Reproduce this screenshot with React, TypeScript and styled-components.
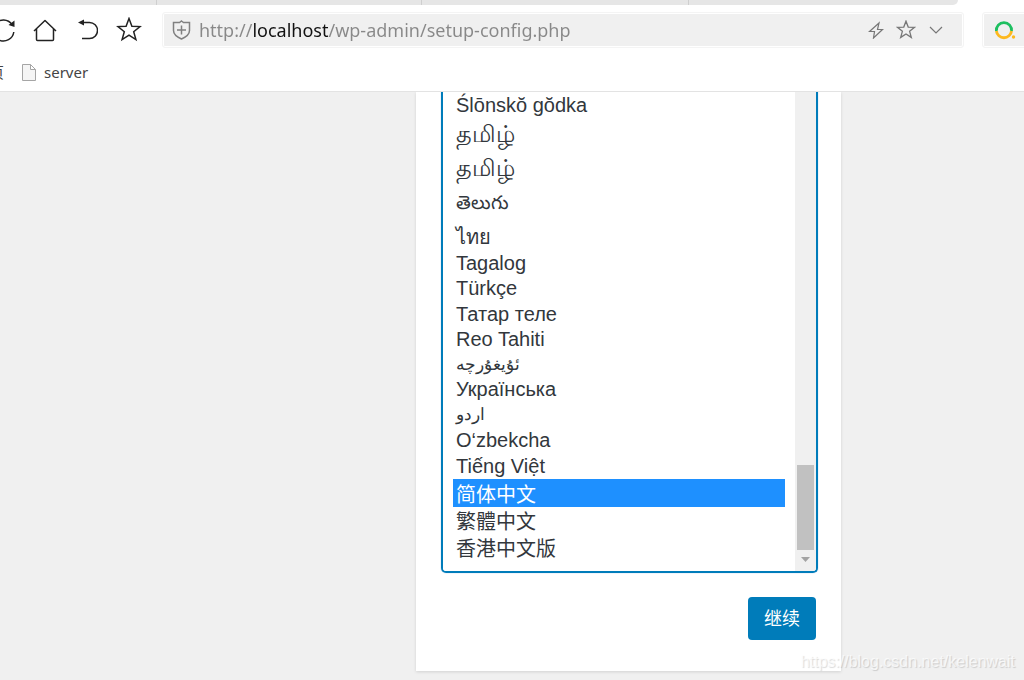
import React from "react";
import styled, { createGlobalStyle } from "styled-components";

const GlobalStyle = createGlobalStyle`
  *, *::before, *::after { box-sizing: border-box; }
  html, body { margin: 0; height: 100%; }
  #root { height: 100%; }
  body {
    font-family: "Liberation Sans", "Noto Sans CJK SC", sans-serif;
    color: #32373c;
    background: #f0f0f0;
    overflow: hidden;
  }
`;

const Shell = styled.div`
  position: relative;
  display: flex;
  flex-direction: column;
  min-height: 100%;
`;

const Header = styled.header`
  background: #fff;
  border-bottom: 1px solid #e3e3e3;
  overflow: hidden;
`;

const TabStrip = styled.div`
  display: flex;
  height: 5px;
  margin-right: 66px;
  background: #e6e6e6;
  border-bottom-right-radius: 8px;
  overflow: hidden;
`;

const TabEdge = styled.div<{ $width: number }>`
  flex: 0 0 ${(p) => p.$width}px;
  border-right: 1px solid #cfcfcf;
`;

const Toolbar = styled.div`
  display: flex;
  align-items: center;
  height: 50px;
  margin-left: -18px;
`;

const ToolButton = styled.button`
  display: flex;
  flex: none;
  align-items: center;
  justify-content: center;
  width: 42px;
  height: 34px;
  padding: 0;
  border: 0;
  background: none;
  color: #222;
`;

const Field = styled.div`
  display: flex;
  align-items: center;
  height: 36px;
  background: #f0f0f0;
  background-clip: padding-box;
  border: 1px solid #f4f4f4;
  box-shadow: inset 0 0 0 1px #fff;
  border-radius: 3px;
`;

const AddressField = styled(Field)`
  flex: 1;
  min-width: 0;
  margin: 0 18px 0 12px;
  padding: 0 12px 0 9px;
  color: #808080;
`;

const AddressInput = styled.input`
  flex: 1;
  min-width: 0;
  height: 30px;
  margin-left: 8px;
  padding: 0;
  border: 0;
  outline: 0;
  font: 18px/30px "Noto Sans", sans-serif;
  color: #888;
  -webkit-text-fill-color: transparent;
  background: linear-gradient(90deg, #888 54px, #111 54px, #111 129px, #888 129px);
  -webkit-background-clip: text;
  background-clip: text;
`;

const FieldButton = styled(ToolButton)`
  width: 30px;
  height: 30px;
  color: #777;
`;

const SearchField = styled(Field)`
  flex: 0 0 60px;
  margin-right: -18px;
  padding-left: 11px;
`;

const Bookmarks = styled.nav`
  display: flex;
  align-items: center;
  height: 36px;
  margin-left: -11px;
  padding-bottom: 2px;
  gap: 18px;
`;

const Bookmark = styled.a`
  display: flex;
  align-items: center;
  gap: 8px;
  color: #444;
  font: 15px/20px "Noto Sans", "Noto Sans CJK SC", sans-serif;
  text-decoration: none;
`;

const Page = styled.main`
  display: grid;
  flex: 1;
  grid-template-columns: 416fr 425px 183fr;
  align-items: start;
`;

const SetupCard = styled.form`
  grid-column: 2;
  padding: 0 23px 31px 25px;
  background: #fff;
  box-shadow: 0 1px 3px rgba(0, 0, 0, 0.13);
  clip-path: inset(0 -6px -6px -6px);
`;

const ListFrame = styled.div`
  display: flex;
  border: 2px solid #007cba;
  border-top: 0;
  border-radius: 0 0 5px 5px;
  box-shadow: 0 0 1px #5b9dd9;
  overflow: hidden;
`;

const LanguageList = styled.select`
  flex: 1;
  min-width: 0;
  height: 479px;
  padding: 0 10px;
  border: 0;
  outline: 0;
  overflow: hidden;
  background: #fff;
  color: #32373c;
  font: 20px/25px "Liberation Sans", "Noto Sans CJK SC", sans-serif;
  scrollbar-width: none;
`;

const Language = styled.option<{ $height: number; $size: number }>`
  display: flex;
  align-items: center;
  height: ${(p) => p.$height}px;
  min-height: 0;
  padding: 0 3px;
  font-size: ${(p) => p.$size}px;
  line-height: 25px;
  direction: ltr;

  &:checked {
    color: #fff;
    background: #1e90ff linear-gradient(#1e90ff, #1e90ff);
  }
`;

const Track = styled.div`
  display: flex;
  flex: 0 0 21px;
  flex-direction: column;
  align-items: center;
  justify-content: flex-end;
  background: #f0f0f0;
`;

const Thumb = styled.div`
  width: 17px;
  height: 85px;
  background: #c1c1c1;
`;

const ScrollArrow = styled.svg`
  display: block;
  margin: 7px 0 9px;
`;

const Step = styled.div`
  display: flex;
  justify-content: flex-end;
  padding: 24px 2px 0 0;
`;

const ContinueButton = styled.button`
  height: 43px;
  padding: 0 16px;
  border: 0;
  border-radius: 4px;
  background: #007cba;
  color: #fff;
  font: 18px/26px "Liberation Sans", "Noto Sans CJK SC", sans-serif;
`;

const Watermark = styled.span`
  position: absolute;
  right: 9px;
  bottom: 8px;
  color: rgba(255, 255, 255, 0.7);
  font-size: 16px;
  line-height: 20px;
  text-shadow: 1px 1px 1px rgba(0, 0, 0, 0.15);
`;

type Entry = { code: string; name: string; height?: number; size?: number };

const languages: Entry[] = [
  { code: "szl", name: "Ślōnskŏ gŏdka", height: 26 },
  { code: "ta_IN", name: "தமிழ்", height: 34, size: 24 },
  { code: "ta_LK", name: "தமிழ்", height: 34, size: 24 },
  { code: "te", name: "తెలుగు", height: 37, size: 19 },
  { code: "th", name: "ไทย", height: 28 },
  { code: "tl", name: "Tagalog" },
  { code: "tr_TR", name: "Türkçe" },
  { code: "tt_RU", name: "Татар теле", height: 26 },
  { code: "tah", name: "Reo Tahiti" },
  { code: "ug_CN", name: "ئۇيغۇرچە", size: 17 },
  { code: "uk", name: "Українська" },
  { code: "ur", name: "اردو", size: 17 },
  { code: "uz_UZ", name: "O‘zbekcha", height: 26 },
  { code: "vi", name: "Tiếng Việt", height: 26 },
  { code: "zh_CN", name: "简体中文", height: 28 },
  { code: "zh_TW", name: "繁體中文", height: 27 },
  { code: "zh_HK", name: "香港中文版", height: 27 },
];

const stroke = { fill: "none", stroke: "currentColor", strokeWidth: 1.5 };

const ReloadIcon = () => (
  <svg width="26" height="26" viewBox="0 0 26 26" {...stroke}>
    <path d="M22 7.500A10.500 10.500 0 1 0 23.800 15" />
    <path d="M24.500 3.500v6.500l-6-2z" fill="currentColor" stroke="none" />
  </svg>
);

const HomeIcon = () => (
  <svg width="24" height="24" viewBox="0 0 24 24" {...stroke} strokeLinejoin="round">
    <path d="M1 13 12 2.500 23 13M3.500 11v10.500q0 1 1 1h15q1 0 1-1V11" />
  </svg>
);

const UndoIcon = () => (
  <svg width="22" height="24" viewBox="0 0 22 24" {...stroke}>
    <path d="M6 4.500h7.500a8 8 0 0 1 0 16H6" />
    <path d="M2 4.500l6-3v6z" fill="currentColor" stroke="none" />
  </svg>
);

const StarIcon = ({ size, weight }: { size: number; weight: number }) => (
  <svg width={size} height={size} viewBox="0 0 26 26" fill="none" stroke="currentColor" strokeWidth={weight}>
    <path d="M13 1.500l2.900 7.700 8.200.4-6.400 5.100 2.200 7.900-6.900-4.500-6.900 4.500 2.200-7.900L1.900 9.600l8.200-.4z" />
  </svg>
);

const ShieldIcon = () => (
  <svg width="19" height="20" viewBox="0 0 19 20" {...stroke}>
    <path d="M9.500 1 11.500 2.500H17.500V10.500C17.500 14.500 14 17 9.500 19 5 17 1.500 14.500 1.500 10.500V2.500H7.500z" />
    <path d="M9.500 5.500v9M5 10h9" />
  </svg>
);

const BoltIcon = () => (
  <svg width="16" height="18" viewBox="0 0 16 18" fill="none" stroke="currentColor" strokeWidth="1.200">
    <path d="M11 2 1.500 10.500h5L5.500 17 14.500 8.500h-5z" />
  </svg>
);

const ChevronIcon = () => (
  <svg width="14" height="8" viewBox="0 0 14 8" fill="none" stroke="currentColor" strokeWidth="1.200">
    <path d="M1 1l6 6 6-6" />
  </svg>
);

const SearchLogo = () => (
  <svg width="22" height="20" viewBox="0 0 22 20" fill="none">
    <path d="M2.400 11a7.600 7.600 0 1 1 15.100 0" stroke="#1dbf60" strokeWidth="2.800" />
    <path d="M2.400 11a7.600 7.600 0 0 0 15.100 0" stroke="#fdb81e" strokeWidth="2.800" />
    <circle cx="19.500" cy="17" r="1.700" fill="#fdb81e" />
  </svg>
);

const FileIcon = () => (
  <svg width="14" height="17" viewBox="0 0 14 17" fill="#f5f5f5" stroke="#a5a5a5">
    <path d="M.5.5h8l5 5v11H.5zM8.500.5v5h5" />
  </svg>
);

export default function App() {
  return (
    <Shell>
      <GlobalStyle />
      <Header>
        <TabStrip>
          <TabEdge $width={157} />
          <TabEdge $width={265} />
          <TabEdge $width={267} />
        </TabStrip>
        <Toolbar>
          <ToolButton aria-label="Reload"><ReloadIcon /></ToolButton>
          <ToolButton aria-label="Home"><HomeIcon /></ToolButton>
          <ToolButton aria-label="Undo"><UndoIcon /></ToolButton>
          <ToolButton aria-label="Favourites"><StarIcon size={26} weight={1.5} /></ToolButton>
          <AddressField>
            <ShieldIcon />
            <AddressInput aria-label="Address" defaultValue="http://localhost/wp-admin/setup-config.php" />
            <FieldButton aria-label="Speed mode"><BoltIcon /></FieldButton>
            <FieldButton aria-label="Add bookmark"><StarIcon size={20} weight={1.7} /></FieldButton>
            <FieldButton aria-label="Address history"><ChevronIcon /></FieldButton>
          </AddressField>
          <SearchField><SearchLogo /></SearchField>
        </Toolbar>
        <Bookmarks>
          <Bookmark href="#home">页</Bookmark>
          <Bookmark href="#server"><FileIcon />server</Bookmark>
        </Bookmarks>
      </Header>
      <Page>
        <SetupCard>
          <ListFrame>
            <LanguageList aria-label="Language" size={17} defaultValue="zh_CN">
              {languages.map((l) => (
                <Language key={l.code} value={l.code} $height={l.height ?? 25} $size={l.size ?? 20}>
                  {l.name}
                </Language>
              ))}
            </LanguageList>
            <Track>
              <Thumb />
              <ScrollArrow width="9" height="5" viewBox="0 0 9 5">
                <path d="M0 0h9L4.500 5z" fill="#a3a3a3" />
              </ScrollArrow>
            </Track>
          </ListFrame>
          <Step>
            <ContinueButton type="button">继续</ContinueButton>
          </Step>
        </SetupCard>
      </Page>
      <Watermark>https://blog.csdn.net/kelenwait</Watermark>
    </Shell>
  );
}
